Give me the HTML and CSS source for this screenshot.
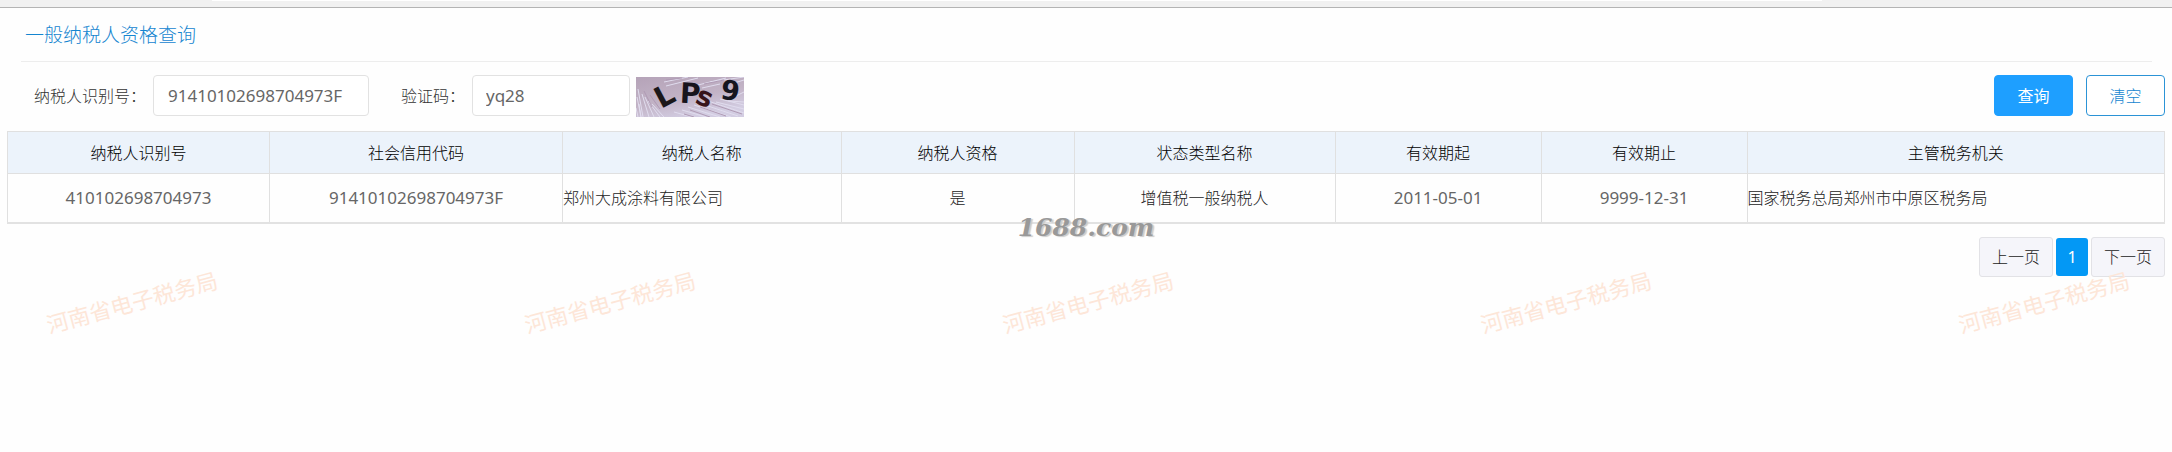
FILE: index.html
```html
<!DOCTYPE html>
<html lang="zh-CN">
<head>
<meta charset="utf-8">
<title>一般纳税人资格查询</title>
<link rel="stylesheet" href="styles.css">
</head>
<body>
<div class="topbar"><div class="topbar-inner"></div></div>
<main class="page">
  <h1 class="title">一般纳税人资格查询</h1>
  <form class="search">
    <label class="label" for="taxno">纳税人识别号：</label>
    <input class="field field-taxno" id="taxno" type="text" value="91410102698704973F">
    <label class="label label-code" for="code">验证码：</label>
    <input class="field field-code" id="code" type="text" value="yq28">
    <svg class="captcha" viewBox="0 0 108 40" role="img" aria-label="验证码图片">
      <defs>
        <linearGradient id="bg" x1="0" y1="0" x2="0.5" y2="1">
          <stop offset="0" stop-color="#b5a3b8"/>
          <stop offset="0.6" stop-color="#c2b3c6"/>
          <stop offset="1" stop-color="#d3cde2"/>
        </linearGradient>
      </defs>
      <rect width="108" height="40" fill="url(#bg)"/>
      <g fill="none" stroke="#e0dcee" stroke-width="1">
        <path d="M2 12l5 28M1 20l4 20M6 17l7 23M9 20l9 20M12 24l12 16M3 27l2 13M16 27l12 13M0 31l2 9"/>
        <path d="M28 5L52 0M30 9L62 1M62 8L90 1M74 5L108 0M66 11L84 7M94 22L108 15M98 6L108 3"/>
        <path d="M52 30L84 40M58 28L95 40M66 27L102 39M72 24L108 36M80 25L108 32M84 22L108 28M46 33L70 40M38 35L56 40M92 24L108 25"/>
      </g>
      <g fill="none" stroke="#b09bb5" stroke-width="1">
        <path d="M8 14l8 16M14 18l10 14M54 33L74 40M64 30L90 39M76 27L106 37M30 3L46 1M68 7L88 3M48 37l10 3"/>
      </g>
      <g class="captcha-text">
        <text x="25" y="32" font-size="29" fill="#1b1719" transform="rotate(-28 25 32)">L</text>
        <text x="44" y="26" font-size="28" fill="#17141c" transform="rotate(3 54 17)">P</text>
        <text x="60" y="29" font-size="27" fill="#36131a" transform="rotate(22 68 22)">s</text>
        <text x="85" y="23" font-size="27" fill="#15151f" transform="rotate(8 95 13)">9</text>
      </g>
    </svg>
    <div class="actions">
      <button class="btn btn-primary" type="button">查询</button>
      <button class="btn btn-plain" type="button">清空</button>
    </div>
  </form>
  <table class="grid">
    <colgroup>
      <col class="c1"><col class="c2"><col class="c3"><col class="c4"><col class="c5"><col class="c6"><col class="c7"><col>
    </colgroup>
    <thead>
      <tr><th>纳税人识别号</th><th>社会信用代码</th><th>纳税人名称</th><th>纳税人资格</th><th>状态类型名称</th><th>有效期起</th><th>有效期止</th><th>主管税务机关</th></tr>
    </thead>
    <tbody>
      <tr><td class="num">410102698704973</td><td class="num">91410102698704973F</td><td class="left">郑州大成涂料有限公司</td><td>是</td><td>增值税一般纳税人</td><td class="num">2011-05-01</td><td class="num">9999-12-31</td><td class="left">国家税务总局郑州市中原区税务局</td></tr>
    </tbody>
  </table>
  <nav class="pager" aria-label="分页">
    <button class="page-btn" type="button">上一页</button>
    <button class="page-btn current" type="button" aria-current="page">1</button>
    <button class="page-btn" type="button">下一页</button>
  </nav>
</main>
<div class="watermarks">
  <span class="mark">河南省电子税务局</span>
  <span class="mark">河南省电子税务局</span>
  <span class="mark">河南省电子税务局</span>
  <span class="mark">河南省电子税务局</span>
  <span class="mark">河南省电子税务局</span>
</div>
<div class="site-mark">1688.com</div>
</body>
</html>
```
FILE: styles.css
```css
* { box-sizing: border-box; }
body {
  position: relative;
  min-height: 100vh;
  margin: 0;
  background: #fefefe;
  color: #666;
  font: 16px/24px "Noto Sans", "Noto Sans CJK SC", sans-serif;
}
.topbar {
  height: 8px;
  padding: 0 350px 0 212px;
  background: #f1f1f1;
  border-bottom: 1px solid #b4b4b4;
}
.topbar-inner { height: 1px; background: #fff; }
.page { padding: 0 7px; }
.title {
  margin: 0 13px 0 14px;
  padding: 13px 4px 12px;
  border-bottom: 1px solid #ededed;
  color: #1485d0;
  font-size: 19px;
  font-weight: 300;
  line-height: 28px;
}
.search {
  display: flex;
  align-items: center;
  padding: 12px 0 14px 27px;
}
.label { width: 119px; font-weight: 300; color: #333; white-space: nowrap; }
.label-code { width: 71px; margin-left: 32px; }
.field {
  height: 41px;
  padding: 0 14px;
  border: 1px solid #e2e2e2;
  border-radius: 4px;
  background: #fff;
  color: #666;
  font-family: inherit;
  font-size: 17px;
}
.field-taxno { width: 216px; }
.field-code { width: 158px; padding: 0 13px; }
.captcha { width: 108px; height: 40px; margin: 3px 0 0 6px; }
.captcha-text { font-family: "DejaVu Sans", sans-serif; font-weight: bold; }
.actions { display: flex; gap: 13px; margin-left: auto; }
.btn {
  width: 79px;
  height: 41px;
  border: 1px solid #1e9fff;
  border-radius: 4px;
  background: #1e9fff;
  color: #fff;
  font: inherit;
}
.btn-plain { border-color: #2b93d6; background: #fff; color: #1485d0; font-weight: 300; }
.grid {
  width: 100%;
  table-layout: fixed;
  border-collapse: collapse;
  border: 1px solid #dcdcdc;
  border-bottom: 2px solid #e2e2e2;
}
.c1 { width: 12.15%; }
.c2 { width: 13.58%; }
.c3 { width: 12.92%; }
.c4 { width: 10.8%; }
.c5 { width: 12.1%; }
.c6 { width: 9.55%; }
.c7 { width: 9.55%; }
.grid th, .grid td { padding: 0; border: 1px solid #e0e0e0; text-align: center; }
.grid th { height: 42px; background: #ecf3fb; color: #000; font-weight: 300; }
.grid td { height: 49px; color: #222; font-weight: 300; }
.grid td.left { text-align: left; }
.grid td.num { color: #666; font-size: 17px; font-weight: 400; }
.pager { display: flex; justify-content: flex-end; align-items: center; gap: 3px; padding-top: 13px; }
.page-btn {
  width: 74px;
  height: 40px;
  padding: 0;
  border: 1px solid #e2e2e6;
  border-radius: 3px;
  background: #f5f5fa;
  color: #222;
  font: inherit;
  font-weight: 300;
}
.page-btn.current { width: 32px; height: 38px; border: 0; background: #0398f5; color: #fff; font-weight: 400; }
.watermarks {
  position: absolute;
  top: 287px;
  left: 0;
  right: 0;
  display: flex;
  justify-content: space-between;
  padding: 0 40px 0 44px;
  pointer-events: none;
}
.mark {
  color: #fde6d8;
  font-size: 22px;
  line-height: 30px;
  white-space: nowrap;
  transform: rotate(-15deg);
}
.site-mark {
  position: absolute;
  top: 213px;
  left: 0;
  right: 0;
  text-align: center;
  color: #999;
  font: italic bold 25px/30px "DejaVu Serif", serif;
  text-shadow: 2px 1px 1px #ccc;
  pointer-events: none;
}
```
